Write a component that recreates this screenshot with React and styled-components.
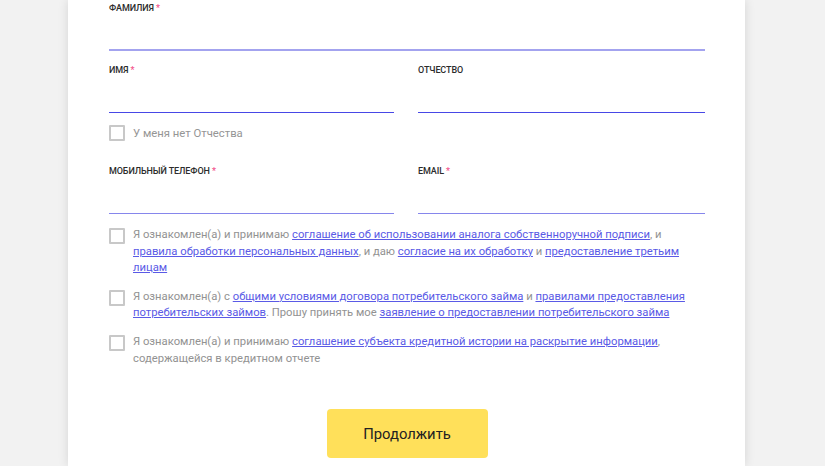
import React from 'react';
import styled, { createGlobalStyle } from 'styled-components';

const GlobalStyle = createGlobalStyle`
  html, body {
    margin: 0;
    padding: 0;
    background: #f2f2f2;
    font-family: Roboto, "Noto Sans", Arial, sans-serif;
  }
`;

function App() {
  return (
    <Page>
      <GlobalStyle />
      <Card>
        <Field>
          <Label>Фамилия <Req>*</Req></Label>
          <Input tone="soft" thick />
        </Field>

        <Row>
          <Field>
            <Label>Имя <Req>*</Req></Label>
            <Input tone="strong" />
          </Field>
          <Field>
            <Label>Отчество</Label>
            <Input tone="strong" />
          </Field>
        </Row>

        <CheckRow>
          <Box />
          <NoteText>У меня нет Отчества</NoteText>
        </CheckRow>

        <Row spaced>
          <Field>
            <Label>Мобильный телефон <Req>*</Req></Label>
            <Input tone="soft" />
          </Field>
          <Field>
            <Label>Email <Req>*</Req></Label>
            <Input tone="soft" />
          </Field>
        </Row>

        <Agreements>
          <Agreement>
            <Box top />
            <AgreeText>
              Я ознакомлен(а) и принимаю <Link>соглашение об использовании аналога собственноручной подписи</Link>, и{' '}
              <Link>правила обработки персональных данных</Link>, и даю <Link>согласие на их обработку</Link> и{' '}
              <Link>предоставление третьим лицам</Link>
            </AgreeText>
          </Agreement>
          <Agreement>
            <Box top />
            <AgreeText>
              Я ознакомлен(а) с <Link>общими условиями договора потребительского займа</Link> и{' '}
              <Link>правилами предоставления потребительских займов</Link>. Прошу принять мое{' '}
              <Link>заявление о предоставлении потребительского займа</Link>
            </AgreeText>
          </Agreement>
          <Agreement>
            <Box top />
            <AgreeText>
              Я ознакомлен(а) и принимаю <Link>соглашение субъекта кредитной истории на раскрытие информации</Link>,
              содержащейся в кредитном отчете
            </AgreeText>
          </Agreement>
        </Agreements>

        <Actions>
          <Button>Продолжить</Button>
        </Actions>
      </Card>
    </Page>
  );
}

const Page = styled.div`
  height: 466px;
  padding: 0 80px 0 68px;
  display: flex;
  overflow: hidden;
`;

const Card = styled.div`
  width: 677px;
  flex: none;
  box-sizing: border-box;
  background: #fff;
  padding: 2px 40px 40px 41px;
  box-shadow: 0 0 10px rgba(0, 0, 0, 0.12);
  display: flex;
  flex-direction: column;
`;

const Row = styled.div`
  display: grid;
  grid-template-columns: 285px 287px;
  column-gap: 24px;
  margin-top: ${p => (p.spaced ? '24px' : '13px')};
`;

const Field = styled.div`
  display: flex;
  flex-direction: column;
`;

const Label = styled.div`
  font-size: 9px;
  line-height: 12px;
  font-weight: 500;
  text-transform: uppercase;
  color: #2b2b2b;
  letter-spacing: -0.1px;
`;

const Req = styled.span`
  color: #f2508a;
`;

const Input = styled.div`
  height: ${p => (p.thick ? '35px' : '36px')};
  border-bottom: ${p => (p.thick ? '2px' : '1px')} solid
    ${p => (p.tone === 'strong' ? '#4848e6' : p.thick ? '#a3a3ef' : '#8686ec')};
`;

const CheckRow = styled.label`
  display: flex;
  align-items: center;
  gap: 8px;
  margin-top: 12px;
  height: 17px;
`;

const Box = styled.span`
  flex: none;
  width: 16px;
  height: 16px;
  box-sizing: border-box;
  border: 2px solid #c8c8c8;
  border-radius: 1px;
  margin-top: ${p => (p.top ? '1px' : '0')};
`;

const NoteText = styled.span`
  font-size: 11.3px;
  color: #959595;
`;

const Agreements = styled.div`
  display: flex;
  flex-direction: column;
  gap: 12px;
  margin-top: 13px;
`;

const Agreement = styled.div`
  display: flex;
  align-items: flex-start;
  gap: 8px;
`;

const AgreeText = styled.p`
  margin: 0;
  font-size: 11.25px;
  line-height: 16.6px;
  color: #929292;
`;

const Link = styled.a`
  color: #5a5ae6;
  text-decoration: underline;
  cursor: pointer;
`;

const Actions = styled.div`
  display: flex;
  justify-content: center;
  margin-top: 42px;
`;

const Button = styled.button`
  width: 161px;
  height: 49px;
  border: none;
  border-radius: 4px;
  background: #ffe05a;
  color: #222;
  font-family: Roboto, Arial, sans-serif;
  font-size: 14.8px;
  font-weight: 400;
  cursor: pointer;
`;

export default App;
